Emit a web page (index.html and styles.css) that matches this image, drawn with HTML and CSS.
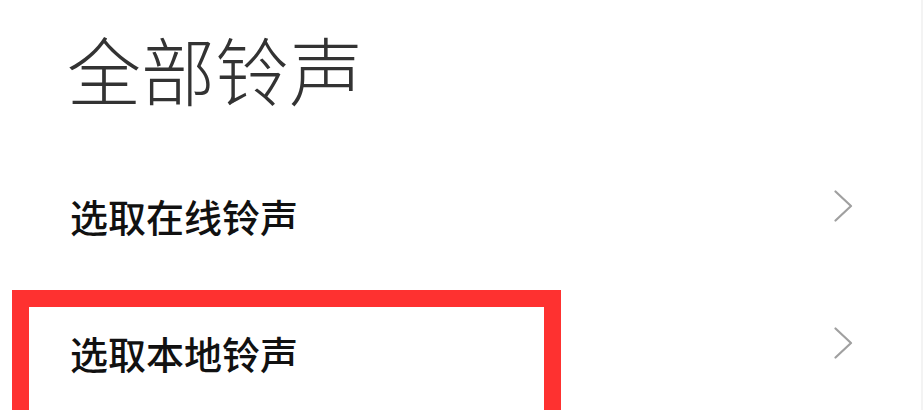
FILE: index.html
```html
<!DOCTYPE html>
<html lang="zh-CN">
<head>
<meta charset="utf-8">
<link rel="stylesheet" href="styles.css">
</head>
<body>
<div class="page">
  <h1 class="title">全部铃声</h1>
  <ul class="list">
    <li class="row">
      <span class="label">选取在线铃声</span>
      <svg class="chev" width="19" height="32" viewBox="0 0 19 32"><polyline points="1.5,1.5 17,16 1.5,30.5" fill="none" stroke="#a0a0a0" stroke-width="2.2" stroke-linecap="round" stroke-linejoin="round"/></svg>
    </li>
    <li class="row">
      <span class="label">选取本地铃声</span>
      <svg class="chev" width="19" height="32" viewBox="0 0 19 32"><polyline points="1.5,1.5 17,16 1.5,30.5" fill="none" stroke="#a0a0a0" stroke-width="2.2" stroke-linecap="round" stroke-linejoin="round"/></svg>
    </li>
  </ul>
  <div class="highlight"></div>
</div>
</body>
</html>
```
FILE: styles.css
```css
html, body {
  margin: 0;
  padding: 0;
  background: #ffffff;
}
body {
  width: 923px;
  height: 410px;
  overflow: hidden;
}
.page {
  position: relative;
  height: 410px;
  box-sizing: border-box;
  border-right: 2px solid #f3f3f3;
  font-family: "Noto Sans CJK SC", "Noto Sans", sans-serif;
}
.title {
  margin: 0;
  padding: 31px 0 0 67px;
  height: 116px;
  box-sizing: content-box;
  font-size: 74px;
  line-height: 74px;
  font-weight: 300;
  color: #333333;
}
.list {
  list-style: none;
  margin: 0;
  padding: 0;
}
.row {
  height: 137px;
  display: flex;
  align-items: center;
  justify-content: space-between;
  padding: 0 68px 0 70px;
}
.label {
  font-size: 38px;
  line-height: 38px;
  font-weight: 500;
  color: #111111;
}
.chev {
  margin-bottom: 20px;
}
.highlight {
  position: absolute;
  left: 12px;
  top: 290px;
  width: 549px;
  height: 120px;
  box-sizing: border-box;
  border: 17px solid #fe3130;
  border-bottom: 0;
}
```
